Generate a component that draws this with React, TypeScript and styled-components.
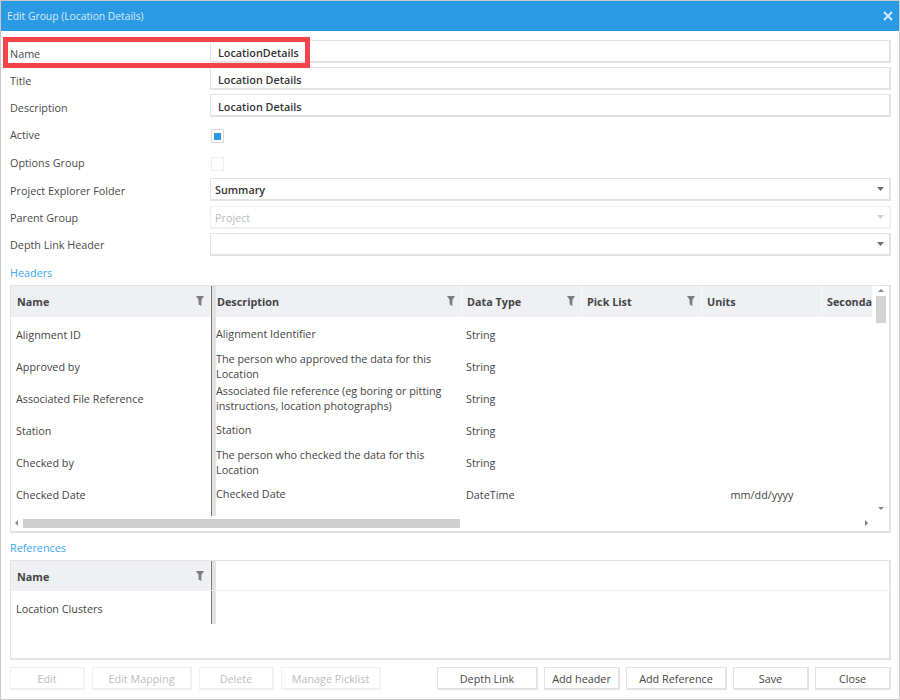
import React from "react";
import styled, { createGlobalStyle } from "styled-components";

const GlobalStyle = createGlobalStyle`
  html, body {
    margin: 0;
    padding: 0;
    background: #fff;
  }
  * {
    box-sizing: border-box;
  }
`;

const FONT = `"Open Sans", "Noto Sans", "Liberation Sans", sans-serif`;

type Row = { name: string; description: string[]; dataType: string; units?: string };

const headerRows: Row[] = [
  { name: "Alignment ID", description: ["Alignment Identifier"], dataType: "String" },
  { name: "Approved by", description: ["The person who approved the data for this", "Location"], dataType: "String" },
  {
    name: "Associated File Reference",
    description: ["Associated file reference (eg boring or pitting", "instructions, location photographs)"],
    dataType: "String",
  },
  { name: "Station", description: ["Station"], dataType: "String" },
  { name: "Checked by", description: ["The person who checked the data for this", "Location"], dataType: "String" },
  { name: "Checked Date", description: ["Checked Date"], dataType: "DateTime", units: "mm/dd/yyyy" },
];

const FilterIcon = () => (
  <FilterSvg viewBox="0 0 8 10" width="8" height="10">
    <polygon points="0,0 8,0 5.4,4 5.4,10 2.6,8.6 2.6,4" fill="#7d7d7d" />
  </FilterSvg>
);

const Caret = ({ $disabled }: { $disabled?: boolean }) => (
  <CaretSvg viewBox="0 0 7 4" width="7" height="4">
    <polygon points="0,0 7,0 3.5,4" fill={$disabled ? "#cfcfcf" : "#707070"} />
  </CaretSvg>
);

const HeadCell = ({ title, pad = 5, filter = true }: { title: string; pad?: number; filter?: boolean }) => (
  <HeaderCell $pad={pad}>
    <span>{title}</span>
    {filter && <FilterIcon />}
  </HeaderCell>
);

export default function App() {
  return (
    <Window>
      <GlobalStyle />
      <TitleBar>
        <TitleText>Edit Group (Location Details)</TitleText>
        <svg viewBox="0 0 10 10" width="10" height="10">
          <path d="M1 1 L9 9 M9 1 L1 9" stroke="#d8ecfa" strokeWidth="2" />
        </svg>
      </TitleBar>
      <Body>
        <FormRow>
          <FieldLabel $shift={2}>Name</FieldLabel>
          <TextField>LocationDetails</TextField>
        </FormRow>
        <FormRow>
          <FieldLabel $shift={2}>Title</FieldLabel>
          <TextField>Location Details</TextField>
        </FormRow>
        <FormRow $bottom={5}>
          <FieldLabel $shift={2}>Description</FieldLabel>
          <TextField>Location Details</TextField>
        </FormRow>
        <CheckRow>
          <FieldLabel $shift={-2}>Active</FieldLabel>
          <CheckBox>
            <CheckMark />
          </CheckBox>
        </CheckRow>
        <CheckRow>
          <FieldLabel $shift={-2}>Options Group</FieldLabel>
          <CheckBox $disabled />
        </CheckRow>
        <FormRow $bottom={5}>
          <FieldLabel $shift={1}>Project Explorer Folder</FieldLabel>
          <SelectField>
            Summary
            <Caret />
          </SelectField>
        </FormRow>
        <FormRow>
          <FieldLabel>Parent Group</FieldLabel>
          <SelectField $disabled>
            Project
            <Caret $disabled />
          </SelectField>
        </FormRow>
        <FormRow $bottom={0}>
          <FieldLabel>Depth Link Header</FieldLabel>
          <SelectField>
            <span />
            <Caret />
          </SelectField>
        </FormRow>

        <SectionLabel>Headers</SectionLabel>
        <HeadersFrame>
          <HeadersMain>
            <HeadersGrid>
              <HeadCell title="Name" pad={6} />
              <Splitter />
              <HeadCell title="Description" pad={1} />
              <HeadCell title="Data Type" />
              <HeadCell title="Pick List" />
              <HeadCell title="Units" filter={false} />
              <HeadCell title="Seconda" filter={false} />
              {headerRows.map((row) => (
                <React.Fragment key={row.name}>
                  <NameCell>{row.name}</NameCell>
                  <DescriptionCell>
                    {row.description.map((line) => (
                      <div key={line}>{line}</div>
                    ))}
                  </DescriptionCell>
                  <DataCell $pad={4}>{row.dataType}</DataCell>
                  <DataCell />
                  <UnitsCell>{row.units}</UnitsCell>
                  <DataCell />
                </React.Fragment>
              ))}
            </HeadersGrid>
            <HScroll>
              <ArrowLeft />
              <HTrack>
                <HThumb />
              </HTrack>
              <ArrowRight />
            </HScroll>
          </HeadersMain>
          <VScroll>
            <ArrowUp />
            <VTrack>
              <VThumb />
            </VTrack>
            <ArrowDown />
            <VCorner />
          </VScroll>
        </HeadersFrame>

        <SectionLabel $top={8}>References</SectionLabel>
        <RefsFrame>
          <RefsGrid>
            <HeadCell title="Name" pad={6} />
            <RefSplitter />
            <RefHeaderFill />
            <NameCell>Location Clusters</NameCell>
          </RefsGrid>
        </RefsFrame>

        <Footer>
          <ButtonGroup $gap={7}>
            <ActionButton disabled $width={75}>Edit</ActionButton>
            <ActionButton disabled $width={100}>Edit Mapping</ActionButton>
            <ActionButton disabled $width={75}>Delete</ActionButton>
            <ActionButton disabled $width={100}>Manage Picklist</ActionButton>
          </ButtonGroup>
          <ButtonGroup $gap={6}>
            <ActionButton $width={101}>Depth Link</ActionButton>
            <ActionButton $width={76}>Add header</ActionButton>
            <ActionButton $width={101}>Add Reference</ActionButton>
            <ActionButton $width={76}>Save</ActionButton>
            <ActionButton $width={76}>Close</ActionButton>
          </ButtonGroup>
        </Footer>
      </Body>
      <Highlight />
    </Window>
  );
}

const Window = styled.div`
  position: relative;
  display: flex;
  flex-direction: column;
  width: 900px;
  height: 700px;
  overflow: hidden;
  background: #fff;
  border: 1px solid #c9c9c9;
  font-family: ${FONT};
  font-size: 10.8px;
  color: #444;
`;

const TitleBar = styled.div`
  display: flex;
  align-items: center;
  justify-content: space-between;
  height: 30px;
  flex: none;
  padding: 0 6px 0 6px;
  background: #2b9ae4;
`;

const TitleText = styled.div`
  color: #d8ecfa;
  font-size: 10.3px;
`;

const Body = styled.div`
  display: flex;
  flex-direction: column;
  flex: 1;
  padding: 9px 8px 0 9px;
`;

const FormRow = styled.div<{ $bottom?: number }>`
  display: flex;
  align-items: center;
  height: 23px;
  flex: none;
  margin-bottom: ${({ $bottom }) => $bottom ?? 4}px;
`;

const CheckRow = styled.div`
  display: flex;
  align-items: center;
  height: 28px;
  flex: none;
`;

const FieldLabel = styled.div<{ $shift?: number }>`
  width: 200px;
  flex: none;
  color: #4a4a4a;
  padding-top: ${({ $shift }) => Math.max($shift ?? 0, 0) * 2}px;
  padding-bottom: ${({ $shift }) => Math.max(-($shift ?? 0), 0) * 2}px;
`;

const TextField = styled.div`
  flex: 1;
  height: 23px;
  padding: 0 7px;
  line-height: 24px;
  font-weight: 600;
  color: #333;
  border: 1px solid #e3e3e3;
  border-width: 1px 2px 2px 1px;
`;

const SelectField = styled.div<{ $disabled?: boolean }>`
  display: flex;
  align-items: center;
  justify-content: space-between;
  flex: 1;
  height: 23px;
  padding: 0 4px 0 4px;
  font-weight: ${({ $disabled }) => ($disabled ? 400 : 600)};
  color: ${({ $disabled }) => ($disabled ? "#bbb" : "#333")};
  border: 1px solid ${({ $disabled }) => ($disabled ? "#f0f0f0" : "#e3e3e3")};
  border-width: 1px 2px 2px 1px;
`;

const CaretSvg = styled.svg`
  flex: none;
  margin-right: 1px;
`;

const CheckBox = styled.div<{ $disabled?: boolean }>`
  display: flex;
  align-items: center;
  justify-content: center;
  width: 13px;
  height: 14px;
  margin-left: 1px;
  border: 1px solid ${({ $disabled }) => ($disabled ? "#eee" : "#dcdcdc")};
`;

const CheckMark = styled.div`
  width: 7px;
  height: 7px;
  background: #2b9ae4;
`;

const SectionLabel = styled.div<{ $top?: number }>`
  height: 14px;
  flex: none;
  margin: ${({ $top }) => $top ?? 10}px 0 5px;
  line-height: 14px;
  color: #3ba6ee;
`;

const HeadersFrame = styled.div`
  display: flex;
  height: 248px;
  flex: none;
  border: 1px solid #e3e3e3;
  border-width: 1px 2px 2px 1px;
`;

const HeadersMain = styled.div`
  display: flex;
  flex-direction: column;
  width: 862px;
  flex: none;
`;

const HeadersGrid = styled.div`
  display: grid;
  grid-template-columns: 200px 5px 246px 120px 120px 120px 51px;
  grid-template-rows: 31px repeat(6, 32px);
  height: 230px;
  flex: none;
  overflow: hidden;
`;

const HeaderCell = styled.div<{ $pad: number }>`
  position: relative;
  display: flex;
  align-items: center;
  padding-left: ${({ $pad }) => $pad}px;
  overflow: hidden;
  white-space: nowrap;
  font-weight: 700;
  color: #444;
  background: #eef0f4;
  border-right: 1px solid #f6f7f9;
`;

const FilterSvg = styled.svg`
  position: absolute;
  top: 10px;
  right: 6px;
`;

const Splitter = styled.div`
  grid-column: 2;
  grid-row: 1 / span 8;
  width: 5px;
  height: 230px;
  background: #e2e2e2;
  border-left: 1px solid #777;
`;

const NameCell = styled.div`
  display: flex;
  align-items: center;
  grid-column: 1;
  padding: 2px 0 0 5px;
  white-space: nowrap;
`;

const DescriptionCell = styled.div`
  display: flex;
  flex-direction: column;
  justify-content: center;
  grid-column: 3;
  padding-top: 1px;
  line-height: 15px;
  white-space: nowrap;
`;

const DataCell = styled.div<{ $pad?: number }>`
  display: flex;
  align-items: center;
  padding: 2px 0 0 ${({ $pad }) => $pad ?? 0}px;
`;

const UnitsCell = styled(DataCell)`
  justify-content: center;
`;

const HScroll = styled.div`
  display: flex;
  align-items: center;
  height: 14px;
  flex: none;
`;

const HTrack = styled.div`
  flex: 1;
  padding-left: 5px;
`;

const HThumb = styled.div`
  width: 437px;
  height: 9px;
  background: #cfcfcf;
`;

const ArrowLeft = styled.div`
  width: 0;
  height: 0;
  margin-left: 4px;
  border: 3px solid transparent;
  border-left: 0;
  border-right: 3px solid #888;
`;

const ArrowRight = styled.div`
  width: 0;
  height: 0;
  margin-right: 5px;
  border: 3px solid transparent;
  border-right: 0;
  border-left: 3px solid #777;
`;

const VScroll = styled.div`
  display: flex;
  flex-direction: column;
  align-items: center;
  flex: 1;
  padding-top: 3px;
`;

const VTrack = styled.div`
  flex: 1;
  padding-top: 4px;
`;

const VThumb = styled.div`
  width: 10px;
  height: 27px;
  background: #d3d3d3;
`;

const ArrowUp = styled.div`
  width: 0;
  height: 0;
  border: 3px solid transparent;
  border-top: 0;
  border-bottom: 3px solid #888;
`;

const ArrowDown = styled.div`
  width: 0;
  height: 0;
  border: 3px solid transparent;
  border-bottom: 0;
  border-top: 3px solid #888;
`;

const VCorner = styled.div`
  height: 21px;
  flex: none;
`;

const RefsFrame = styled.div`
  height: 100px;
  flex: none;
  border: 1px solid #e3e3e3;
  border-width: 1px 2px 2px 1px;
`;

const RefsGrid = styled.div`
  display: grid;
  grid-template-columns: 200px 5px 1fr;
  grid-template-rows: 30px 33px;
`;

const RefSplitter = styled(Splitter)`
  height: 63px;
  grid-row: 1 / span 2;
`;

const RefHeaderFill = styled.div`
  border-bottom: 1px solid #f0f0f0;
  margin-left: -5px;
  grid-column: 3;
`;

const Footer = styled.div`
  display: flex;
  justify-content: space-between;
  margin-top: 7px;
`;

const ButtonGroup = styled.div<{ $gap: number }>`
  display: flex;
  gap: ${({ $gap }) => $gap}px;
`;

const ActionButton = styled.button<{ $width: number }>`
  width: ${({ $width }) => $width}px;
  height: 23px;
  padding: 0;
  font-family: ${FONT};
  font-size: 10.8px;
  color: #444;
  background: #fff;
  border: 1px solid #e3e3e3;
  border-width: 1px 2px 2px 1px;

  &:disabled {
    color: #bdbdbd;
    border-color: #f0f0f0;
  }
`;

const Highlight = styled.div`
  position: absolute;
  top: 36px;
  left: 2px;
  width: 307px;
  height: 31px;
  border: 5px solid #f4444a;
  pointer-events: none;
`;
